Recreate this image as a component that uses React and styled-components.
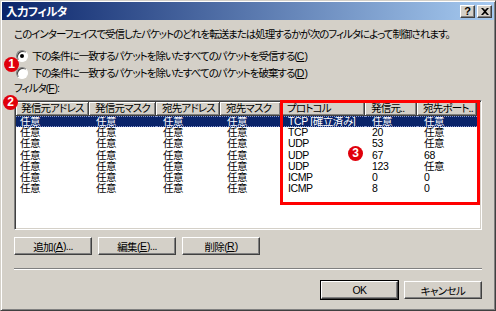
import React from "react";
import styled, { createGlobalStyle } from "styled-components";

const GlobalStyle = createGlobalStyle`
  html, body {
    margin: 0;
    padding: 0;
    background: #d4d0c8;
  }
  body {
    font-family: "Liberation Sans", "Noto Sans CJK JP", sans-serif;
    font-size: 11px;
  }
`;

const Window = styled.div`
  position: relative;
  width: 496px;
  height: 311px;
  box-sizing: border-box;
  background: #d4d0c8;
  border: 1px solid;
  border-color: #d4d0c8 #404040 #404040 #d4d0c8;
  box-shadow: inset 1px 1px #fff, inset -1px -1px #808080;
  padding: 1px;
  display: flex;
  flex-direction: column;
  font-feature-settings: "palt";
  color: #000;
  overflow: hidden;
`;

const TitleBar = styled.div`
  height: 18px;
  display: flex;
  align-items: center;
  padding: 0 2px 0 4px;
  background: linear-gradient(to right, #0a246a, #a6caf0);
  color: #fff;
  font-weight: bold;
  font-size: 11.5px;
`;

const Title = styled.span`
  flex: 1;
  letter-spacing: -0.5px;
`;

const CapButton = styled.div`
  width: 15px;
  height: 13px;
  box-sizing: border-box;
  margin-left: 2px;
  background: #d4d0c8;
  border: 1px solid;
  border-color: #fff #404040 #404040 #fff;
  box-shadow: inset -1px -1px #808080;
  display: flex;
  align-items: center;
  justify-content: center;
  color: #000;
  font-family: "Liberation Sans", sans-serif;
  font-weight: bold;
  font-size: 11px;
  line-height: 1;
`;

const Content = styled.div`
  flex: 1;
  display: flex;
  flex-direction: column;
  padding: 0 12px;
`;

const Jp = styled.span`
  font-size: 10.5px;
  letter-spacing: -1px;
`;

const Desc = styled.div`
  margin-top: 7px;
  line-height: 14px;
  white-space: nowrap;
  font-size: 10.5px;
  letter-spacing: -1px;
`;

const RadioGroup = styled.div`
  margin-top: 6px;
  display: flex;
  flex-direction: column;
`;

const RadioRow = styled.label`
  height: 17px;
  display: flex;
  align-items: center;
  gap: 4px;
  padding-left: 2px;
  white-space: nowrap;
  font-size: 10.5px;
  letter-spacing: -1px;
`;

const RadioDot = styled.span`
  width: 12px;
  height: 12px;
  box-sizing: border-box;
  border-radius: 50%;
  background: #fff;
  border: 1px solid;
  border-color: #808080 #fff #fff #808080;
  box-shadow: inset 1px 1px #404040;
  display: flex;
  align-items: center;
  justify-content: center;
  &::after {
    content: "";
    width: 4px;
    height: 4px;
    border-radius: 50%;
    background: ${(p) => (p.$checked ? "#000" : "transparent")};
  }
`;

const U = styled.span`
  text-decoration: underline;
  letter-spacing: 0;
`;

const FieldLabel = styled.div`
  line-height: 14px;
  font-size: 10.5px;
  letter-spacing: -1px;
`;

const ListBox = styled.div`
  position: relative;
  margin-top: 5px;
  height: 130px;
  box-sizing: border-box;
  background: #fff;
  border: 1px solid;
  border-color: #808080 #fff #fff #808080;
  box-shadow: inset 1px 1px #404040, inset -1px -1px #d4d0c8;
  padding: 1px 2px 1px 1px;
`;

const Grid = styled.div`
  display: grid;
  grid-template-columns: ${(p) => p.$cols};
`;

const HeadCell = styled.div`
  height: 14px;
  box-sizing: border-box;
  background: #d4d0c8;
  border-right: 1px solid #404040;
  border-bottom: 1px solid #404040;
  box-shadow: inset 1px 1px #fff, inset -1px -1px #808080;
  padding-left: ${(p) => (p.$first ? 5 : 6)}px;
  line-height: 13px;
  white-space: nowrap;
  overflow: hidden;
  font-size: 10.5px;
  letter-spacing: -0.8px;
`;

const Row = styled.div`
  display: contents;
`;

const Cell = styled.div`
  height: 11.2px;
  padding-left: ${(p) => (p.$first ? 4 : 7)}px;
  white-space: nowrap;
  overflow: hidden;
  background: ${(p) => (p.$sel ? "#0a246a" : "transparent")};
  color: ${(p) => (p.$sel ? "#fff" : "#000")};
  border-top: ${(p) => (p.$sel ? "1px dotted #8a9ad0" : "none")};
  border-bottom: ${(p) => (p.$sel ? "1px dotted #8a9ad0" : "none")};
  box-sizing: border-box;
  line-height: ${(p) => (p.$sel ? "9px" : "11px")};
  font-size: 10.5px;
  letter-spacing: -0.4px;
`;

const ButtonRow = styled.div`
  display: flex;
  gap: 6px;
  margin-top: ${(p) => p.$mt}px;
  justify-content: ${(p) => (p.$right ? "flex-end" : "flex-start")};
`;

const Button = styled.div`
  width: ${(p) => p.$w || 78}px;
  height: 18px;
  box-sizing: border-box;
  background: #d4d0c8;
  border: 1px solid;
  border-color: #fff #404040 #404040 #fff;
  box-shadow: inset -1px -1px #808080;
  display: flex;
  align-items: center;
  justify-content: center;
  font-size: 10.5px;
  letter-spacing: -0.6px;
  ${(p) =>
    p.$default &&
    `
    outline: 1px solid #000;
    outline-offset: 0;
  `}
`;

const Separator = styled.div`
  margin-top: 13px;
  height: 1px;
  background: #808080;
  border-bottom: 1px solid #fff;
`;

const Badge = styled.div`
  position: absolute;
  left: ${(p) => p.$x - 7}px;
  top: ${(p) => p.$y - 7}px;
  width: 15px;
  height: 15px;
  border-radius: 50%;
  background: #e0000b;
  color: #fff;
  font-family: "Liberation Sans", sans-serif;
  font-weight: bold;
  font-size: 12px;
  line-height: 15px;
  text-align: center;
  z-index: 3;
`;

const Highlight = styled.div`
  position: absolute;
  left: 279px;
  top: 99px;
  width: 200px;
  height: 105px;
  box-sizing: border-box;
  border: 3px solid #f00;
  z-index: 2;
`;

const cols = [73, 67, 64, 61, 84, 52, 60];
const gridCols = cols.map((w) => w + "px").join(" ") + " 1fr";

const headers = [
  "発信元アドレス",
  "発信元マスク",
  "宛先アドレス",
  "宛先マスク",
  "プロトコル",
  "発信元..",
  "宛先ポート..",
];

const rows = [
  ["TCP [確立済み]", "任意", "任意"],
  ["TCP", "20", "任意"],
  ["UDP", "53", "任意"],
  ["UDP", "67", "68"],
  ["UDP", "123", "任意"],
  ["ICMP", "0", "0"],
  ["ICMP", "8", "0"],
];

function CloseIcon() {
  return (
    <svg width="8" height="7" viewBox="0 0 8 7">
      <path d="M0 0 L2 0 L4 2 L6 0 L8 0 L5 3.5 L8 7 L6 7 L4 5 L2 7 L0 7 L3 3.5 Z" fill="#000" />
    </svg>
  );
}

export default function App() {
  return (
    <>
      <GlobalStyle />
      <Window>
        <TitleBar>
          <Title>入力フィルタ</Title>
          <CapButton>?</CapButton>
          <CapButton>
            <CloseIcon />
          </CapButton>
        </TitleBar>
        <Content>
          <Desc>
            このインターフェイスで受信したパケットのどれを転送または処理するかが次のフィルタによって制御されます。
          </Desc>
          <RadioGroup>
            <RadioRow>
              <RadioDot $checked />
              <span>
                下の条件に一致するパケットを除いたすべてのパケットを受信する(<U>C</U>)
              </span>
            </RadioRow>
            <RadioRow>
              <RadioDot />
              <span>
                下の条件に一致するパケットを除いたすべてのパケットを破棄する(<U>D</U>)
              </span>
            </RadioRow>
          </RadioGroup>
          <FieldLabel>
            フィルタ(<U>F</U>):
          </FieldLabel>
          <ListBox>
            <Grid $cols={gridCols}>
              {headers.map((h, i) => (
                <HeadCell key={h} $first={i === 0}>
                  {h}
                </HeadCell>
              ))}
              <div />
              {rows.map((r, ri) => (
                <Row key={ri}>
                  {["任意", "任意", "任意", "任意", ...r].map((c, ci) => (
                    <Cell key={ci} $first={ci === 0} $sel={ri === 0}>
                      {c}
                    </Cell>
                  ))}
                  <div />
                </Row>
              ))}
            </Grid>
          </ListBox>
          <ButtonRow $mt={7}>
            <Button>
              追加(<U>A</U>)...
            </Button>
            <Button>
              編集(<U>E</U>)...
            </Button>
            <Button>
              削除(<U>R</U>)
            </Button>
          </ButtonRow>
          <Separator />
          <ButtonRow $right $mt={11}>
            <Button $w={77} $default>
              OK
            </Button>
            <Button>キャンセル</Button>
          </ButtonRow>
        </Content>
        <Highlight />
        <Badge $x={10} $y={63}>1</Badge>
        <Badge $x={9} $y={101}>2</Badge>
        <Badge $x={354} $y={152}>3</Badge>
      </Window>
    </>
  );
}
